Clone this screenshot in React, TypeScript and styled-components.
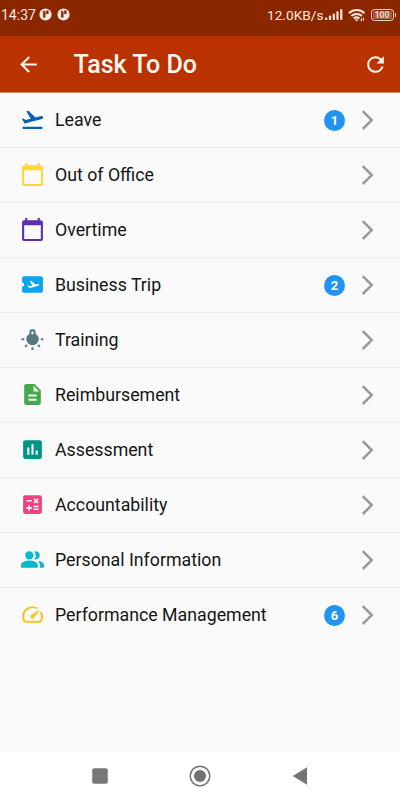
import React from 'react';
import styled, { createGlobalStyle } from 'styled-components';
import type { IconType } from 'react-icons';
import {
  MdAirplaneTicket,
  MdArrowBack,
  MdAssessment,
  MdCalculate,
  MdCalendarToday,
  MdDescription,
  MdFlightTakeoff,
  MdPeopleAlt,
  MdRefresh,
  MdSpeed,
} from 'react-icons/md';

const GlobalStyle = createGlobalStyle`
  * { box-sizing: border-box; }
  body {
    margin: 0;
    background: #fafafa;
    font-family: Roboto, "Liberation Sans", sans-serif;
  }
`;

const Screen = styled.div`
  display: flex;
  flex-direction: column;
  width: 400px;
  height: 800px;
  overflow: hidden;
  background: #fafafa;
`;

const StatusBar = styled.header`
  display: flex;
  justify-content: space-between;
  height: 36px;
  padding: 0 4px 7px 1px;
  background: #8a2600;
  color: #f9e6dc;
`;

const StatusGroup = styled.div<{ $gap: number }>`
  display: flex;
  align-items: center;
  gap: ${({ $gap }) => $gap}px;
`;

const StatusText = styled.span`
  font-size: 14px;
  line-height: 16px;
  white-space: nowrap;
`;

const Clock = styled(StatusText)`
  margin-right: -2px;
`;

const Speed = styled(StatusText)`
  margin-right: -4px;
  font-size: 13.700px;
`;

const Battery = styled.div`
  display: flex;
  align-items: center;
`;

const BatteryBody = styled.span`
  display: flex;
  align-items: center;
  justify-content: center;
  width: 23px;
  height: 12px;
  border: 1px solid #efd2c5;
  border-radius: 3.5px;
  background: #a95b40;
  box-shadow: inset 0 0 0 1px #8a2600;
  font-size: 8.5px;
  font-weight: 500;
  line-height: 10px;
`;

const BatteryTip = styled.span`
  width: 1.5px;
  height: 4px;
  margin-left: 1px;
  background: #efd2c5;
`;

const AppBar = styled.div`
  display: flex;
  align-items: center;
  height: 57px;
  padding: 0 12px 0 16px;
  background: #b93200;
  border-bottom: 1px solid #d78c76;
  color: #fff5f0;
`;

const IconButton = styled.button`
  display: flex;
  padding: 0;
  border: 0;
  background: none;
  color: inherit;
`;

const Title = styled.h1`
  flex: 1;
  margin: 0 0 0 32.5px;
  padding-top: 2px;
  font-size: 25.100px;
  font-weight: 500;
  line-height: 30px;
`;

const TaskList = styled.ul`
  flex: 1;
  margin: 0;
  padding: 0;
  list-style: none;
`;

const TaskRow = styled.li`
  display: flex;
  align-items: center;
  height: 55px;
  padding: 0 26px 0 20px;
  border-bottom: 1px solid #ececec;
  color: #151515;

  &:last-child {
    border-bottom-color: transparent;
  }
`;

const TaskIcon = styled.span<{ $color: string }>`
  display: flex;
  width: 25px;
  margin-right: 10px;
  padding-bottom: 1px;
  color: ${({ $color }) => $color};
`;

const TaskLabel = styled.span`
  flex: 1;
  font-size: 17.750px;
  line-height: 22px;
  white-space: nowrap;
`;

const Badge = styled.span`
  display: flex;
  align-items: center;
  justify-content: center;
  width: 21px;
  height: 21px;
  margin-right: 16px;
  border-radius: 50%;
  background: #2094ee;
  color: #fff;
  font-size: 13px;
  font-weight: 700;
  line-height: 15px;
`;

const NavBar = styled.nav`
  display: flex;
  justify-content: center;
  align-items: center;
  gap: 78px;
  height: 48px;
  background: #fff;
`;

function BulbIcon({ size }: { size: number }) {
  return (
    <svg width={size} height={size} viewBox="0 0 24 24" fill="currentColor">
      <path
        fillRule="evenodd"
        d="M9 4.200a2 2 0 0 1 2-2h2a2 2 0 0 1 2 2V6.800c1.800 1 3 2.700 3 4.800a6 6 0 0 1-12 0c0-2.100 1.200-3.800 3-4.800zM11 4.200V7h2V4.200z"
      />
      <path d="M1.500 10.700h2.500v2H1.500zM20 10.700h2.500v2H20zM11 19.500h2v2.500h-2zM4.300 18.300l1.800-1.800 1.300 1.300-1.800 1.800zM19.700 18.300l-1.800-1.800-1.300 1.300 1.800 1.800z" />
    </svg>
  );
}

function NotificationIcon() {
  return (
    <svg width="13" height="13" viewBox="0 0 13 13">
      <circle cx="6.500" cy="6.500" r="6.100" fill="#fbebe3" />
      <path d="M4.300 2.600v6.700h1.900V3.500M7.300 2.800h2v3h-2z" fill="#8a2600" stroke="#8a2600" strokeWidth=".5" />
    </svg>
  );
}

function SignalIcon() {
  return (
    <svg width="18" height="13" viewBox="0 0 18 13" fill="currentColor">
      <rect x="0" y="9.500" width="2.300" height="2.500" rx=".8" />
      <rect x="3.900" y="7.500" width="2.200" height="4.500" rx=".8" />
      <rect x="7.700" y="5.500" width="2.200" height="6.500" rx=".8" />
      <rect x="11.400" y="3.300" width="2.200" height="8.700" rx=".8" />
      <rect x="15.200" y="1" width="2.200" height="11" rx=".8" />
    </svg>
  );
}

function WifiIcon() {
  return (
    <svg width="18" height="14" viewBox="0 0 18 14" fill="none" stroke="currentColor" strokeWidth="2">
      <path d="M.9 5.200a11.400 11.400 0 0 1 15.600 0M3.400 8a7.800 7.800 0 0 1 10.600 0M5.800 10.600a4.300 4.300 0 0 1 5.600 0" />
      <path d="M6.600 11.400h4l-2 2z" fill="currentColor" stroke="none" />
      <path d="M13.400 10.400v2.800M15.400 9.800v2.800" strokeWidth="1.200" />
    </svg>
  );
}

function Chevron() {
  return (
    <svg width="13" height="21" viewBox="0 0 13 21" fill="none" stroke="#999" strokeWidth="2.500">
      <path d="M1.800 1.200L10.700 10.100L1.800 19" />
    </svg>
  );
}

interface Task {
  label: string;
  color: string;
  icon: IconType | typeof BulbIcon;
  count?: number;
}

const tasks: Task[] = [
  { label: 'Leave', color: '#0d5eb8', icon: MdFlightTakeoff, count: 1 },
  { label: 'Out of Office', color: '#fdd835', icon: MdCalendarToday },
  { label: 'Overtime', color: '#5e2eb0', icon: MdCalendarToday },
  { label: 'Business Trip', color: '#08a4f0', icon: MdAirplaneTicket, count: 2 },
  { label: 'Training', color: '#587683', icon: BulbIcon },
  { label: 'Reimbursement', color: '#43a94c', icon: MdDescription },
  { label: 'Assessment', color: '#009484', icon: MdAssessment },
  { label: 'Accountability', color: '#f43f83', icon: MdCalculate },
  { label: 'Personal Information', color: '#08b8ce', icon: MdPeopleAlt },
  { label: 'Performance Management', color: '#f6c51b', icon: MdSpeed, count: 6 },
];

export default function App() {
  return (
    <>
      <GlobalStyle />
      <Screen>
        <StatusBar>
          <StatusGroup $gap={5}>
            <Clock>14:37</Clock>
            <NotificationIcon />
            <NotificationIcon />
          </StatusGroup>
          <StatusGroup $gap={5}>
            <Speed>12.0KB/s</Speed>
            <SignalIcon />
            <WifiIcon />
            <Battery>
              <BatteryBody>100</BatteryBody>
              <BatteryTip />
            </Battery>
          </StatusGroup>
        </StatusBar>
        <AppBar>
          <IconButton aria-label="Back">
            <MdArrowBack size={25} />
          </IconButton>
          <Title>Task To Do</Title>
          <IconButton aria-label="Refresh">
            <MdRefresh size={25} />
          </IconButton>
        </AppBar>
        <TaskList>
          {tasks.map(({ label, color, icon: Icon, count }) => (
            <TaskRow key={label}>
              <TaskIcon $color={color}>
                <Icon size={25} />
              </TaskIcon>
              <TaskLabel>{label}</TaskLabel>
              {count !== undefined && <Badge>{count}</Badge>}
              <Chevron />
            </TaskRow>
          ))}
        </TaskList>
        <NavBar>
          <svg width="22" height="22" viewBox="0 0 22 22">
            <rect x="3.200" y="3.200" width="15.600" height="15.600" rx="2" fill="#777" />
          </svg>
          <svg width="22" height="22" viewBox="0 0 22 22">
            <circle cx="11" cy="11" r="9.800" fill="none" stroke="#6b6b6b" strokeWidth="1.400" />
            <circle cx="11" cy="11" r="6" fill="#737373" />
          </svg>
          <svg width="22" height="22" viewBox="0 0 22 22">
            <path d="M3.800 11L18 2.200V19.800z" fill="#737373" />
          </svg>
        </NavBar>
      </Screen>
    </>
  );
}
